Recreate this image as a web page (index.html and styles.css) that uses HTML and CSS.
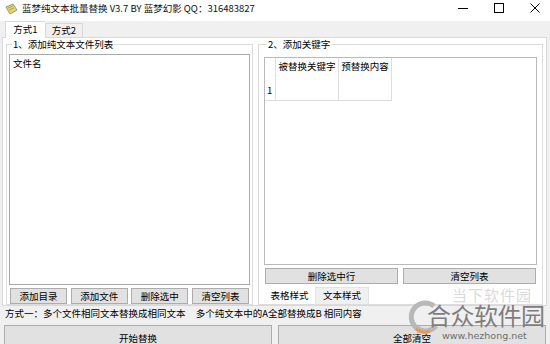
FILE: index.html
```html
<!DOCTYPE html>
<html lang="zh-CN">
<head>
    <meta charset="UTF-8">
    <title>蓝梦纯文本批量替换</title>
    <link rel="stylesheet" href="styles.css">
</head>
<body>
    <div class="window">
        <!-- 标题栏 -->
        <div class="titlebar">
            <svg class="app-icon" width="13" height="12" viewBox="0 0 13 12">
                <path d="M1 4 L8 1 L12 7 L5 11 Z" fill="#e6d56c" stroke="#8a8a5a" stroke-width="0.8"/>
                <path d="M3 5 L8 3 M4 7 L9 5" stroke="#9a9060" stroke-width="0.7"/>
            </svg>
            <div class="title">蓝梦纯文本批量替换 V3.7 BY 蓝梦幻影 QQ：316483827</div>
            <div class="controls">
                <span><svg width="10" height="10" viewBox="0 0 10 10"><path d="M0 5.5 H10" stroke="#000" stroke-width="1"/></svg></span>
                <span><svg width="10" height="10" viewBox="0 0 10 10"><rect x="0.5" y="0.5" width="9" height="9" fill="none" stroke="#000" stroke-width="1"/></svg></span>
                <span><svg width="10" height="10" viewBox="0 0 10 10"><path d="M0.5 0.5 L9.5 9.5 M9.5 0.5 L0.5 9.5" stroke="#000" stroke-width="1"/></svg></span>
            </div>
        </div>

        <!-- 选项卡 -->
        <div class="tabstrip">
            <span class="tab active">方式1</span>
            <span class="tab">方式2</span>
        </div>

        <div class="tabpage">
            <!-- 文件列表 -->
            <fieldset class="group group-files">
                <legend>1、添加纯文本文件列表</legend>
                <div class="listbox">
                    <div class="list-head">文件名</div>
                </div>
                <div class="btn-row">
                    <button class="btn small">添加目录</button>
                    <button class="btn small">添加文件</button>
                    <button class="btn small">删除选中</button>
                    <button class="btn small">清空列表</button>
                </div>
            </fieldset>

            <!-- 关键字表格 -->
            <fieldset class="group group-keys">
                <legend>2、添加关键字</legend>
                <div class="grid">
                    <div class="grid-table">
                        <div class="cell row-head"></div>
                        <div class="cell col-head">被替换关键字</div>
                        <div class="cell col-head">预替换内容</div>
                        <div class="cell row-head row-num">1</div>
                        <div class="cell row-cell"></div>
                        <div class="cell row-cell"></div>
                    </div>
                </div>
                <div class="btn-row">
                    <button class="btn wide">删除选中行</button>
                    <button class="btn wide">清空列表</button>
                </div>
                <div class="subtabs">
                    <span class="subtab active">表格样式</span>
                    <span class="subtab">文本样式</span>
                </div>
            </fieldset>
        </div>

        <div class="status">
            <span>方式一：多个文件相同文本替换成相同文本</span>
            <span class="status-second">多个纯文本中的A全部替换成B 相同内容</span>
        </div>

        <div class="actions">
            <button class="btn big">开始替换</button>
            <button class="btn big">全部清空</button>
        </div>

        <!-- 水印 -->
        <div class="watermark">
            <div class="wm-faint">当下软件园</div>
            <svg class="wm-logo" width="34" height="36" viewBox="0 0 34 36">
                <path d="M26 7 A14 14 0 1 0 28 27" fill="none" stroke="#b8b8b8" stroke-width="5"/>
                <path d="M8 30 A14 14 0 0 0 22 32" fill="none" stroke="#e39a5a" stroke-width="3"/>
            </svg>
            <div class="wm-name">合众软件园</div>
            <div class="wm-url">www.hezhong.net</div>
        </div>
    </div>
</body>
</html>
```

FILE: styles.css
```css
* {
    margin: 0;
    padding: 0;
    box-sizing: border-box;
}
body {
    width: 550px;
    height: 344px;
    overflow: hidden;
    background: #f0f0f0;
    font-family: "Noto Sans CJK SC", "Noto Sans", sans-serif;
    font-size: 9.5px;
    color: #000;
}
.window {
    position: relative;
    width: 550px;
    height: 344px;
    overflow: hidden;
}
/* 标题栏 */
.titlebar {
    height: 21px;
    background: #fff;
    display: flex;
    align-items: center;
    padding-left: 5px;
}
.app-icon {
    margin-right: 4px;
    margin-top: -3px;
}
.title {
    flex: 1;
    line-height: 12px;
    margin-top: -5px;
    color: #111;
}
.controls {
    display: flex;
    height: 100%;
    margin-right: -3px;
}
.controls span {
    width: 36px;
    display: flex;
    align-items: center;
    justify-content: center;
    margin-top: -5px;
}
/* 选项卡 */
.tabstrip {
    height: 16px;
    display: flex;
    align-items: flex-end;
    padding-left: 5px;
}
.tab {
    height: 14px;
    line-height: 13px;
    text-align: center;
    width: 38px;
    border: 1px solid #d9d9d9;
    border-bottom: none;
    background: #f0f0f0;
}
.tab.active {
    width: 40px;
    height: 17px;
    line-height: 15px;
    background: #fff;
    margin-bottom: -1px;
    position: relative;
    z-index: 1;
    border-right: none;
}
.tabpage {
    margin-left: 2px;
    width: 545px;
    height: 269px;
    border: 1px solid #d9d9d9;
    background: #fff;
    display: flex;
    gap: 5px;
    padding: 0 3px;
}
/* 分组框 */
.group {
    border: 1px solid #dcdcdc;
    display: flex;
    flex-direction: column;
    min-width: 0;
}
.group legend {
    line-height: 12px;
    padding: 0 1px;
    margin-left: 3px;
}
.group-files {
    width: 247px;
    padding: 4px 2px 0;
}
.group-keys {
    width: 285px;
    padding: 7px 5px 0;
}
.listbox {
    flex: 1;
    border: 1px solid #a9a9a9;
}
.list-head {
    line-height: 12px;
    padding: 2px 3px;
}
.btn-row {
    display: flex;
    justify-content: space-between;
    margin-top: 3px;
    padding: 0 1px;
}
.btn {
    font: inherit;
    color: #000;
    background: #e1e1e1;
    border: 1px solid #adadad;
    height: 16px;
    line-height: 14px;
}
.btn.small {
    width: 57px;
}
.btn.wide {
    width: 133px;
}
/* 表格 */
.grid {
    flex: 1;
    border: 1px solid #b9b9b9;
    background: #fff;
}
.grid-table {
    display: grid;
    grid-template-columns: 11px 63px 53px;
    grid-template-rows: 22px 21px;
}
.cell {
    border-right: 1px solid #dedede;
}
.col-head {
    text-align: center;
    line-height: 12px;
    padding-top: 2px;
}
.row-num {
    line-height: 20px;
    padding-left: 2px;
}
.row-head,
.row-cell {
    border-bottom: 1px solid #dedede;
}
.row-head:first-child {
    border-bottom: none;
}
.subtabs {
    height: 17px;
    margin-top: 3px;
    display: flex;
}
.subtab {
    line-height: 17px;
    text-align: center;
}
.subtab.active {
    width: 51px;
}
.subtab:not(.active) {
    width: 54px;
    background: #f0f0f0;
    border: 1px solid #e3e3e3;
    border-bottom: none;
    line-height: 15px;
}
/* 底部 */
.status {
    height: 15px;
    line-height: 15px;
    padding-left: 5px;
    white-space: nowrap;
}
.status-second {
    margin-left: 8px;
}
.actions {
    display: flex;
    gap: 6px;
    padding: 4px 4px 0;
}
.btn.big {
    width: 268px;
    height: 26px;
    line-height: 24px;
}
/* 水印 */
.watermark {
    position: absolute;
    left: 406px;
    top: 286px;
    width: 144px;
    height: 58px;
    pointer-events: none;
}
.wm-faint {
    position: absolute;
    left: 46px;
    top: 1px;
    font-size: 15px;
    line-height: 15px;
    color: #dadada;
    letter-spacing: 1px;
}
.wm-logo {
    position: absolute;
    left: 2px;
    top: 13px;
}
.wm-name {
    position: absolute;
    left: 21px;
    top: 16px;
    font-size: 24px;
    line-height: 25px;
    color: #7e7e7e;
    letter-spacing: -0.5px;
}
.wm-url {
    position: absolute;
    left: 36px;
    top: 44px;
    font-family: "DejaVu Sans", sans-serif;
    font-size: 9.5px;
    line-height: 12px;
    color: #6e6e6e;
}
```
